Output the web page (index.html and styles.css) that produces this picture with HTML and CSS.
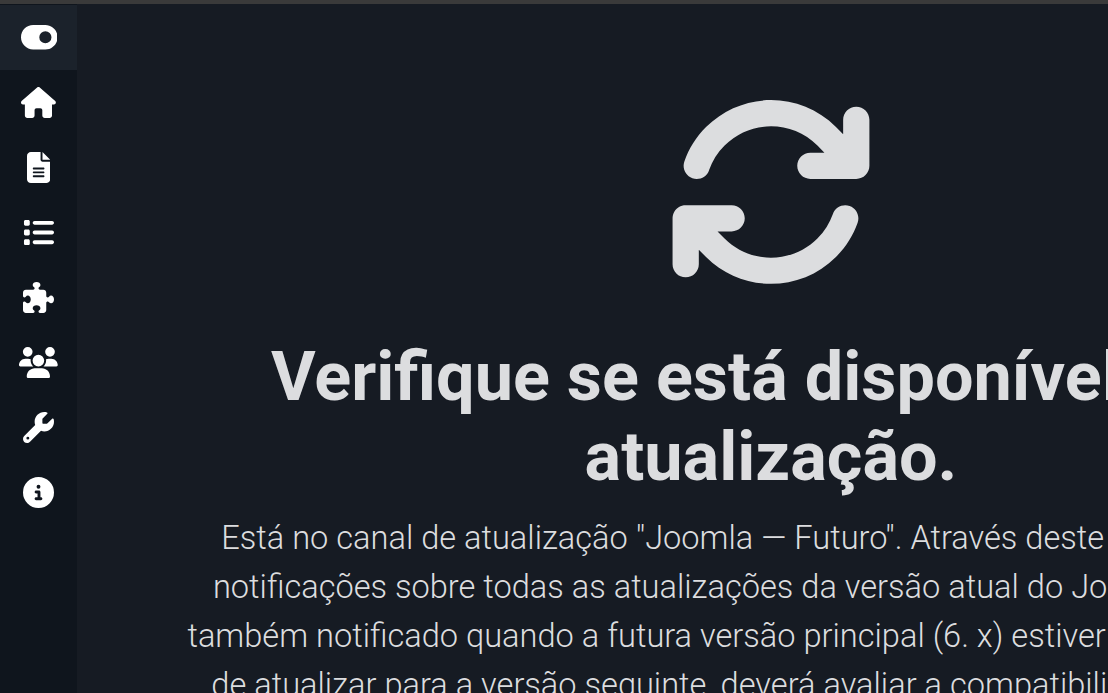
FILE: index.html
```html
<!DOCTYPE html>
<html lang="pt">
<head>
    <meta charset="UTF-8">
    <meta name="viewport" content="width=device-width, initial-scale=1.0">
    <title>Atualização do Joomla</title>
    <link rel="stylesheet" href="styles.css">
</head>
<body>
    <div class="top-strip"></div>
    <div class="layout">
        <nav class="sidebar">
            <a class="nav-item nav-toggle" href="#">
                <svg class="nav-icon" viewBox="0 0 576 512"><path d="M192 64C86 64 0 150 0 256S86 448 192 448H384c106 0 192-86 192-192s-86-192-192-192H192zm192 96a96 96 0 1 1 0 192 96 96 0 1 1 0-192z"/></svg>
            </a>
            <a class="nav-item" href="#">
                <svg class="nav-icon" viewBox="0 0 576 512"><path d="M575.8 255.5c0 18-15 32.1-32 32.1h-32l.7 160.2c0 2.7-.2 5.4-.5 8.1V472c0 22.1-17.9 40-40 40H456c-1.1 0-2.2 0-3.3-.1c-1.4 .1-2.8 .1-4.2 .1H416 392c-22.1 0-40-17.9-40-40V448 384c0-17.7-14.3-32-32-32H256c-17.7 0-32 14.3-32 32v64 24c0 22.1-17.9 40-40 40H160 128.1c-1.5 0-3-.1-4.5-.2c-1.2 .1-2.4 .2-3.6 .2H104c-22.1 0-40-17.9-40-40V360c0-.9 0-1.9 .1-2.8V287.6H32c-18 0-32-14-32-32.1c0-9 3-17 10-24L266.4 8c7-7 15-8 22-8s15 2 21 7L564.8 231.5c8 7 12 15 11 24z"/></svg>
            </a>
            <a class="nav-item" href="#">
                <svg class="nav-icon" viewBox="0 0 384 512"><path d="M64 0C28.7 0 0 28.7 0 64V448c0 35.3 28.7 64 64 64H320c35.3 0 64-28.7 64-64V160H256c-17.7 0-32-14.3-32-32V0H64zM256 0V128H384L256 0zM112 256H272c8.8 0 16 7.2 16 16s-7.2 16-16 16H112c-8.8 0-16-7.2-16-16s7.2-16 16-16zm0 64H272c8.8 0 16 7.2 16 16s-7.2 16-16 16H112c-8.8 0-16-7.2-16-16s7.2-16 16-16zm0 64H272c8.8 0 16 7.2 16 16s-7.2 16-16 16H112c-8.8 0-16-7.2-16-16s7.2-16 16-16z"/></svg>
            </a>
            <a class="nav-item" href="#">
                <svg class="nav-icon" viewBox="0 0 512 512"><path d="M40 48C26.7 48 16 58.7 16 72v48c0 13.3 10.7 24 24 24H88c13.3 0 24-10.7 24-24V72c0-13.3-10.7-24-24-24H40zM192 64c-17.7 0-32 14.3-32 32s14.3 32 32 32H480c17.7 0 32-14.3 32-32s-14.3-32-32-32H192zm0 160c-17.7 0-32 14.3-32 32s14.3 32 32 32H480c17.7 0 32-14.3 32-32s-14.3-32-32-32H192zm0 160c-17.7 0-32 14.3-32 32s14.3 32 32 32H480c17.7 0 32-14.3 32-32s-14.3-32-32-32H192zM16 232v48c0 13.3 10.7 24 24 24H88c13.3 0 24-10.7 24-24V232c0-13.3-10.7-24-24-24H40c-13.3 0-24 10.7-24 24zM40 368c-13.3 0-24 10.7-24 24v48c0 13.3 10.7 24 24 24H88c13.3 0 24-10.7 24-24V392c0-13.3-10.7-24-24-24H40z"/></svg>
            </a>
            <a class="nav-item" href="#">
                <svg class="nav-icon" viewBox="0 0 512 512"><path d="M192 104.8c0-9.2-5.8-17.3-13.2-22.8C167.2 73.3 160 61.3 160 48c0-26.5 28.7-48 64-48s64 21.5 64 48c0 13.3-7.2 25.3-18.8 34c-7.4 5.5-13.2 13.6-13.2 22.8c0 12.8 10.4 23.2 23.2 23.2H336c26.5 0 48 21.5 48 48v56.8c0 12.8 10.4 23.2 23.2 23.2c9.2 0 17.3-5.8 22.8-13.2c8.7-11.6 20.7-18.8 34-18.8c26.5 0 48 28.7 48 64s-21.5 64-48 64c-13.3 0-25.3-7.2-34-18.8c-5.5-7.4-13.6-13.2-22.8-13.2c-12.8 0-23.2 10.4-23.2 23.2V464c0 26.5-21.5 48-48 48H279.2c-12.8 0-23.2-10.4-23.2-23.2c0-9.2 5.8-17.3 13.2-22.8c11.6-8.7 18.8-20.7 18.8-34c0-26.5-28.7-48-64-48s-64 21.5-64 48c0 13.3 7.2 25.3 18.8 34c7.4 5.5 13.2 13.6 13.2 22.8c0 12.8-10.4 23.2-23.2 23.2H48c-26.5 0-48-21.5-48-48V343.2C0 330.4 10.4 320 23.2 320c9.2 0 17.3 5.8 22.8 13.2C54.7 344.8 66.7 352 80 352c26.5 0 48-28.7 48-64s-21.5-64-48-64c-13.3 0-25.3 7.2-34 18.8C40.5 250.2 32.4 256 23.2 256C10.4 256 0 245.6 0 232.8V176c0-26.5 21.5-48 48-48H168.8c12.8 0 23.2-10.4 23.2-23.2z"/></svg>
            </a>
            <a class="nav-item" href="#">
                <svg class="nav-icon" viewBox="0 0 640 512"><path d="M144 0a80 80 0 1 1 0 160A80 80 0 1 1 144 0zM512 0a80 80 0 1 1 0 160A80 80 0 1 1 512 0zM0 298.7C0 239.8 47.8 192 106.7 192h42.7c15.9 0 31 3.5 44.6 9.7c-1.3 7.2-1.9 14.7-1.9 22.3c0 38.2 16.8 72.5 43.3 96c-.2 0-.4 0-.7 0H21.3C9.6 320 0 310.4 0 298.7zM405.3 320c-.2 0-.4 0-.7 0c26.6-23.5 43.3-57.8 43.3-96c0-7.6-.7-15-1.9-22.3c13.6-6.3 28.7-9.7 44.6-9.7h42.7C592.2 192 640 239.8 640 298.7c0 11.8-9.6 21.3-21.3 21.3H405.3zM224 224a96 96 0 1 1 192 0 96 96 0 1 1 -192 0zM128 485.3C128 411.7 187.7 352 261.3 352H378.7C452.3 352 512 411.7 512 485.3c0 14.7-11.9 26.7-26.7 26.7H154.7c-14.7 0-26.7-11.9-26.7-26.7z"/></svg>
            </a>
            <a class="nav-item" href="#">
                <svg class="nav-icon" viewBox="0 0 512 512"><path d="M352 320c88.4 0 160-71.6 160-160c0-15.3-2.2-30.1-6.2-44.2c-3.1-10.8-16.4-13.2-24.3-5.3l-76.8 76.8c-3 3-7.1 4.7-11.3 4.7H336c-8.8 0-16-7.2-16-16V118.6c0-4.2 1.7-8.3 4.7-11.3l76.8-76.8c7.9-7.9 5.4-21.2-5.3-24.3C382.1 2.2 367.3 0 352 0C263.6 0 192 71.6 192 160c0 19.1 3.4 37.5 9.5 54.5L19.9 396.1C7.2 408.8 0 426.1 0 444.1C0 481.6 30.4 512 67.9 512c18 0 35.3-7.2 48-19.9L297.5 310.5c17 6.2 35.4 9.5 54.5 9.5zM80 408a24 24 0 1 1 0 48 24 24 0 1 1 0-48z"/></svg>
            </a>
            <a class="nav-item" href="#">
                <svg class="nav-icon" viewBox="0 0 512 512"><path d="M256 512A256 256 0 1 0 256 0a256 256 0 1 0 0 512zM216 336h24V272H216c-13.3 0-24-10.7-24-24s10.7-24 24-24h48c13.3 0 24 10.7 24 24v88h8c13.3 0 24 10.7 24 24s-10.7 24-24 24H216c-13.3 0-24-10.7-24-24s10.7-24 24-24zm40-208a32 32 0 1 1 0 64 32 32 0 1 1 0-64z"/></svg>
            </a>
        </nav>
        <main class="content">
            <div class="hero">
                <svg class="hero-icon" viewBox="0 0 512 512"><path d="M105.1 202.6c7.7-21.8 20.2-42.3 37.8-59.8c62.5-62.5 163.8-62.5 226.3 0L386.3 160H352c-17.7 0-32 14.3-32 32s14.3 32 32 32H463.5c0 0 0 0 0 0h.4c17.7 0 32-14.3 32-32V80c0-17.7-14.3-32-32-32s-32 14.3-32 32v35.2L414.4 97.6c-87.5-87.5-229.3-87.5-316.8 0C73.2 122 55.6 150.7 44.8 181.4c-5.9 16.7 2.9 34.9 19.5 40.8s34.9-2.9 40.8-19.5zM39 289.3c-5 1.5-9.8 4.2-13.7 8.2c-4 4-6.7 8.8-8.1 14c-.3 1.2-.6 2.5-.8 3.8c-.3 1.7-.4 3.4-.4 5.1V432c0 17.7 14.3 32 32 32s32-14.3 32-32V396.9l17.6 17.5 0 0c87.5 87.4 229.3 87.4 316.7 0c24.4-24.4 42.1-53.1 52.9-83.7c5.9-16.7-2.9-34.9-19.5-40.8s-34.9 2.9-40.8 19.5c-7.7 21.8-20.2 42.3-37.8 59.8c-62.5 62.5-163.8 62.5-226.3 0l-.1-.1L125.6 352H160c17.7 0 32-14.3 32-32s-14.3-32-32-32H48.4c-1.6 0-3.2 .1-4.8 .3s-3.1 .5-4.6 1z"/></svg>
                <h1 class="hero-title">Verifique se está disponível uma atualização.</h1>
                <p class="hero-text">Está no canal de atualização "Joomla — Futuro". Através deste canal receberá<br>notificações sobre todas as atualizações da versão atual do Joomla 5.x e será,<br>também notificado quando a futura versão principal (6. x) estiver disponível. Antes<br>de atualizar para a versão seguinte, deverá avaliar a compatibilidade dos sítios.</p>
            </div>
        </main>
    </div>
</body>
</html>
```

FILE: styles.css
```css
html, body {
    height: 100%;
}

body {
    margin: 0;
    display: flex;
    flex-direction: column;
    overflow: hidden;
    font-family: Roboto, sans-serif;
    background: #161b23;
}

.top-strip {
    height: 4px;
    flex-shrink: 0;
    background: #3a3a3a;
}

.layout {
    flex: 1;
    display: flex;
    min-height: 0;
}

.sidebar {
    width: 77px;
    flex-shrink: 0;
    padding-top: 1px;
    background: #0f151d;
}

.nav-item {
    height: 65px;
    display: flex;
    align-items: center;
    justify-content: center;
}

.nav-toggle {
    background: #1b222b;
}

.nav-icon {
    height: 31px;
    fill: #fff;
}

.nav-toggle .nav-icon {
    height: 32.5px;
    margin-left: 1px;
}

.content {
    flex: 1;
    min-width: 0;
    overflow: hidden;
}

.hero {
    width: 1388px;
    padding-top: 83px;
    text-align: center;
    color: #dcdddf;
}

.hero-icon {
    display: block;
    width: 210px;
    height: 210px;
    margin: 0 auto;
    fill: #dcdddf;
}

.hero-title {
    width: 1100px;
    margin: 40px auto 0;
    font-size: 68.4px;
    font-weight: 700;
    line-height: 80px;
}

.hero-text {
    margin: 17px 0 0;
    font-size: 32.6px;
    font-weight: 300;
    line-height: 49px;
}
```
